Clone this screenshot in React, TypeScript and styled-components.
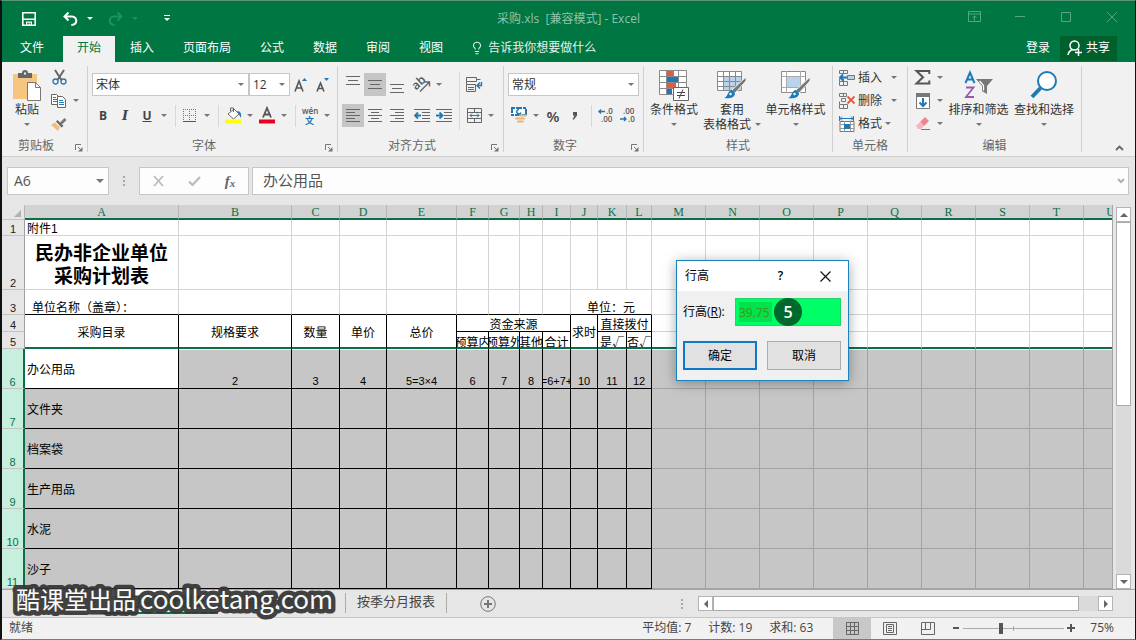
import React from "react";
import styled, { createGlobalStyle, css } from "styled-components";
import { Lightbulb } from "lucide-react";

const GREEN = "#007642";
const LINE = "#0c6f49";
const UI = `"Open Sans", "Noto Sans CJK SC", sans-serif`;
const CELL = `"Liberation Sans", "Noto Sans CJK SC", sans-serif`;

const Global = createGlobalStyle`
  *, *::before, *::after { box-sizing: border-box; }
  body { margin: 0; font: 12px/16px ${UI}; color: #444; background: #e6e6e6; }
  button, input, select { font: inherit; color: inherit; margin: 0; padding: 0; border: 0; background: none; border-radius: 0; }
  button { display: flex; align-items: center; justify-content: center; white-space: nowrap; }
  svg { display: block; flex: none; overflow: visible; }
`;

const Window = styled.div`
  position: relative;
  display: flex;
  flex-direction: column;
  min-height: 100vh;
  overflow: hidden;
  border: solid #111;
  border-width: 1px 1px 1px 2px;
  border-top-color: #5b9478;
  border-bottom-color: #7a7a7a;
`;

/* ---------- title bar ---------- */
const TitleBar = styled.header`
  display: grid;
  grid-template-columns: 1fr auto 1fr;
  align-items: center;
  height: 35px;
  background: ${GREEN};
  color: #8fc4ab;
`;
const QuickBar = styled.div`
  display: flex;
  align-items: center;
  padding-left: 16px;
  color: #fff;
`;
const QuickButton = styled.button<{ $w: number; $dim?: boolean }>`
  gap: 9px;
  width: ${(p) => p.$w}px;
  height: 24px;
  color: ${(p) => (p.$dim ? "#17965c" : "#fff")};
`;
const DocTitle = styled.h1`
  margin: 0;
  font-size: 12px;
  font-weight: 400;
  white-space: pre;
`;
const WindowButtons = styled.div`
  display: flex;
  justify-content: flex-end;
  color: #55a683;
`;
const WindowButton = styled.button`
  width: 46px;
  height: 28px;
  padding-bottom: 4px;
`;

/* ---------- ribbon tabs ---------- */
const TabBar = styled.nav`
  display: flex;
  gap: 1px;
  height: 26px;
  background: ${GREEN};
  color: #fff;
`;
const RibbonTab = styled.button<{ $active?: boolean; $wide?: boolean }>`
  padding: 0 ${(p) => (p.$wide ? 18 : 14)}px 2px;
  ${(p) => p.$active && css`background: #f1f1f1; color: ${GREEN};`}
`;
const TellMe = styled.button`
  gap: 4px;
  padding: 0 12px 2px;
  color: #e4f2ea;
`;
const Account = styled.div`
  display: flex;
  gap: 10px;
  margin-left: auto;
  padding-right: 18px;
`;
const SignIn = styled.button`
  padding-bottom: 2px;
`;
const ShareButton = styled.button`
  gap: 4px;
  width: 57px;
  height: 25px;
  padding-bottom: 2px;
  background: #00602c;
`;

/* ---------- ribbon ---------- */
const Ribbon = styled.section`
  display: flex;
  height: 95px;
  padding: 4px 0;
  background: #f1f1f1;
  border-bottom: 1px solid #cfcfcf;
`;
const GroupBox = styled.div<{ $w: number }>`
  display: flex;
  flex-direction: column;
  flex: none;
  width: ${(p) => p.$w}px;
  border-right: 1px solid #d0d0d0;
`;
const GroupBody = styled.div`
  display: flex;
  flex: 1;
  padding-left: 4px;
`;
const GroupFooter = styled.div`
  display: flex;
  align-items: center;
  height: 16px;
  margin-bottom: -2px;
  color: #666;
`;
const GroupLabel = styled.span`
  flex: 1;
  text-align: center;
`;
const Launcher = styled.button`
  width: 17px;
  height: 16px;
  padding-top: 4px;
`;
const Stack = styled.div<{ $three?: boolean }>`
  display: flex;
  flex-direction: column;
  ${(p) => !p.$three && css`gap: 8px; padding-top: 7px;`}
`;
const Line = styled.div`
  display: flex;
  align-items: center;
  height: 23px;
`;
const Tool = styled.button<{ $on?: boolean; $indent?: boolean; $look?: "italic" | "percent" }>`
  width: 22px;
  height: 23px;
  margin-left: ${(p) => (p.$indent ? 3 : 0)}px;
  background: ${(p) => (p.$on ? "#c5c5c5" : "none")};
  font-weight: 700;
  ${(p) => p.$look === "italic" && css`font: italic 700 13px "DejaVu Serif", serif;`}
  ${(p) => p.$look === "percent" && css`font-size: 15px; font-weight: 600;`}
`;
const ArrowButton = styled.button<{ $far?: boolean }>`
  width: 12px;
  height: 23px;
  margin-left: ${(p) => (p.$far ? 6 : 0)}px;
  color: #777;
`;
const Divider = styled.span<{ $tall?: boolean }>`
  flex: none;
  width: 1px;
  height: ${(p) => (p.$tall ? 58 : 22)}px;
  margin: ${(p) => (p.$tall ? "6px 3px 0 4px" : "0 3px 0 5px")};
  background: #d8d8d8;
`;
const SelectBox = styled.label<{ $w: number }>`
  position: relative;
  flex: none;
  width: ${(p) => p.$w}px;
  height: 23px;
  color: #777;
  select {
    width: 100%;
    height: 100%;
    padding: 0 16px 0 3px;
    appearance: none;
    background: #fff;
    border: 1px solid #c6c6c6;
    color: #333;
  }
  svg { position: absolute; right: 5px; top: 10px; pointer-events: none; }
`;
const BigButton = styled.button<{ $w: number }>`
  flex-direction: column;
  justify-content: flex-start;
  width: ${(p) => p.$w}px;
  height: 70px;
  padding-top: 2px;
  line-height: 15px;
  color: #333;
`;
const BigIcon = styled.span`
  display: grid;
  place-items: center;
  height: 34px;
`;
const BigLine = styled.span`
  display: flex;
  align-items: center;
  gap: 4px;
  height: 15px;
  color: #333;
  svg { color: #777; }
`;
const RowButton = styled.button`
  gap: 3px;
  height: 23px;
  padding-left: 2px;
  color: #333;
`;
const Collapse = styled.button`
  align-self: flex-end;
  width: 20px;
  height: 9px;
  margin: 0 6px 0 auto;
`;

/* ---------- formula bar ---------- */
const FormulaBar = styled.section`
  display: flex;
  height: 48px;
  padding: 10px 6px 10px 5px;
  color: #555;
  font-size: 15px;
`;
const NameBox = styled.label`
  position: relative;
  width: 102px;
  color: #777;
  input { width: 100%; height: 28px; padding: 0 0 2px 6px; border: 1px solid #c6c6c6; background: #fdfdfd; font-size: 14px; color: #555; }
  svg { position: absolute; right: 5px; top: 12px; }
`;
const Grip = styled.span`
  display: grid;
  place-items: center;
  width: 30px;
  color: #a8a8a8;
`;
const FormulaTools = styled.div`
  display: flex;
  justify-content: space-around;
  width: 110px;
  margin-right: 3px;
  border: 1px solid #c6c6c6;
  background: #fdfdfd;
`;
const FormulaTool = styled.button`
  width: 36px;
  font: italic 700 15px "Liberation Serif", serif;
  color: #666;
  small { font-size: 11px; padding-top: 4px; }
`;
const FormulaField = styled.label`
  position: relative;
  flex: 1;
  color: #b0b0b0;
  input { width: 100%; height: 28px; padding: 0 24px 3px 10px; border: 1px solid #c6c6c6; background: #fdfdfd; color: #555; }
  svg { position: absolute; right: 4px; top: 11px; }
`;

/* ---------- worksheet ---------- */
const Main = styled.main`
  display: flex;
  flex: 1;
`;
const GridPane = styled.div`
  flex: 1;
  min-width: 0;
  overflow: hidden;
  border-right: 1px solid #a5a5a5;
`;
const Sheet = styled.table`
  width: 0;
  table-layout: fixed;
  border-collapse: separate;
  border-spacing: 0;
  color: #000;
  font: 12px/11px ${CELL};
`;
const ColHead = styled.th`
  height: 15px;
  padding: 2px 0 0;
  overflow: hidden;
  background: #d2d2d2;
  border-right: 1px solid #b4b4b4;
  border-bottom: 2px solid ${LINE};
  color: ${LINE};
  font: 12px/11px "Liberation Serif", serif;
`;
const Corner = styled(ColHead)`
  background: #e6e6e6;
  border-right-color: #b4b4b4;
  border-bottom: 1px solid #c6c6c6;
  svg { margin-left: 12px; }
`;
const RowHead = styled.th<{ $sel?: boolean; $h: number }>`
  height: ${(p) => p.$h}px;
  padding: 0;
  vertical-align: bottom;
  font: 11px/12px ${CELL};
  border-bottom: 1px solid #c4c4c4;
  border-right: 1px solid #a0a0a0;
  background: #e6e6e6;
  color: #222;
  ${(p) => p.$sel && css`
    background: #c6efde;
    color: ${LINE};
    border-right: 2px solid ${LINE};
  `}
`;
type Kind = "grid" | "boxed" | "sel" | "selBoxed" | "active";
const edge: Record<Kind, string> = { grid: "#d4d4d4", boxed: "#000", sel: "#a3a3a3", selBoxed: "#000", active: "#000" };
const fill: Record<Kind, string> = { grid: "#fff", boxed: "#fff", sel: "#c6c6c6", selBoxed: "#c6c6c6", active: "#fff" };
const Cell = styled.td<{ $kind?: Kind; $bottom?: "black" | "green"; $low?: boolean; $topLight?: boolean }>`
  padding: 0;
  overflow: hidden;
  vertical-align: ${(p) => (p.$low ? "bottom" : "middle")};
  background: ${(p) => fill[p.$kind ?? "grid"]};
  border-right: 1px solid ${(p) => edge[p.$kind ?? "grid"]};
  border-bottom: 1px solid ${(p) => edge[p.$kind ?? "grid"]};
  ${(p) => p.$bottom === "black" && css`border-bottom-color: #000;`}
  ${(p) => p.$bottom === "green" && css`border-bottom: 2px solid ${LINE};`}
  ${(p) => p.$topLight && css`box-shadow: inset 0 1px #eefaf5;`}
`;
const Clip = styled.div<{ $align?: "left" | "indent" }>`
  display: flex;
  justify-content: ${(p) => (p.$align ? "flex-start" : "center")};
  padding-top: 4px;
  padding-left: ${(p) => (p.$align === "left" ? 2 : p.$align === "indent" ? 7 : 0)}px;
  white-space: nowrap;
`;
const Figures = styled(Clip)`
  padding-top: 2px;
  font-size: 11px;
  line-height: 13px;
`;
const SubHead = styled(Clip)`
  height: 15px;
  padding-top: 0;
  line-height: 19px;
  font-family: "Noto Sans CJK SC", sans-serif;
`;
const Heading = styled.div`
  font: 700 19px/23px "Noto Sans CJK SC", sans-serif;
  text-align: center;
  white-space: nowrap;
`;
const VScroll = styled.div`
  display: flex;
  flex-direction: column;
  width: 22px;
  padding: 2px 4px 0 3px;
`;
const ScrollButton = styled.button`
  flex: none;
  width: 15px;
  height: 15px;
  background: #fff;
  border: 1px solid #b4b4b4;
  color: #666;
`;
const Thumb = styled.div<{ $grow: number }>`
  flex: ${(p) => p.$grow} 1 0;
  background: #fff;
  border: 1px solid #ababab;
`;
const Track = styled.div<{ $grow: number }>`
  flex: ${(p) => p.$grow} 1 0;
  background: #dadada;
`;

/* ---------- sheet tabs ---------- */
const SheetBar = styled.nav`
  display: flex;
  height: 28px;
  border-top: 1px solid #a5a5a5;
  background: #e6e6e6;
  font-size: 13px;
`;
const SheetNav = styled.div`
  display: flex;
  align-items: center;
  justify-content: space-around;
  width: 100px;
`;
const SheetTab = styled.button<{ $w: number; $active?: boolean }>`
  width: ${(p) => p.$w}px;
  height: 24px;
  ${(p) => p.$active
    ? css`background: #fff; color: ${LINE}; font-weight: 700; border-bottom: 2px solid ${GREEN};`
    : css`height: 20px; margin-top: 3px; border-right: 1px solid #ababab; padding-bottom: 4px;`}
`;
const AddSheet = styled.button`
  width: 82px;
  color: #777;
`;
const BarGrip = styled.span`
  display: grid;
  place-items: center;
  width: 32px;
  margin-left: auto;
  color: #a8a8a8;
`;
const HScroll = styled.div`
  display: flex;
  width: 415px;
  height: 15px;
  margin: 6px 22px 0 0;
`;

/* ---------- status bar ---------- */
const StatusBar = styled.footer`
  display: flex;
  align-items: center;
  height: 22px;
  padding: 0 21px 1px 7px;
  background: #f1f1f1;
  border-top: 1px solid #c6c6c6;
`;
const Stats = styled.div`
  display: flex;
  gap: 17px;
  margin: 0 20px 0 auto;
`;
const Views = styled.div`
  display: flex;
  margin-right: 2px;
`;
const ViewButton = styled.button<{ $on?: boolean }>`
  width: 38px;
  height: 21px;
  margin-bottom: -1px;
  background: ${(p) => (p.$on ? "#c8c8c8" : "none")};
  color: #666;
`;
const ZoomStep = styled.button`
  width: 14px;
  height: 20px;
`;
const ZoomRange = styled.input`
  width: 101px;
  height: 14px;
  appearance: none;
  background:
    linear-gradient(#aaa, #aaa) center / 1px 5px no-repeat,
    linear-gradient(#aaa, #aaa) center / 100% 1px no-repeat;
  &::-webkit-slider-thumb { appearance: none; width: 4px; height: 11px; background: #555; }
`;
const ZoomValue = styled.span`
  margin-left: 12px;
`;

/* ---------- row height dialog ---------- */
const Dialog = styled.form`
  position: absolute;
  left: 674px;
  top: 259px;
  width: 173px;
  border: 1px solid #1b82c0;
  background: #f0f0f0;
  box-shadow: 0 2px 12px rgba(0, 0, 0, 0.35);
  color: #000;
`;
const DialogTitle = styled.div`
  display: flex;
  align-items: center;
  height: 30px;
  padding-left: 8px;
  background: #fff;
`;
const DialogTitleButton = styled.button<{ $push?: boolean }>`
  width: 45px;
  height: 28px;
  font-weight: 600;
  margin-left: ${(p) => (p.$push ? "auto" : 0)};
`;
const Field = styled.div`
  position: relative;
  display: flex;
  align-items: center;
  justify-content: space-between;
  margin: 7px 7px 15px 6px;
  input {
    width: 106px;
    height: 28px;
    padding-left: 3px;
    border: 1px solid #1fd568;
    background: linear-gradient(#00e24e, #00e24e) 3px 3px / 33px 20px no-repeat #00ff66;
    color: #3f9a12;
  }
`;
const StepBadge = styled.span`
  position: absolute;
  right: 39px;
  top: 0;
  width: 28px;
  height: 28px;
  border-radius: 50%;
  background: #00692c;
  color: #fff;
  font: 600 16px/28px "Open Sans", sans-serif;
  text-align: center;
`;
const DialogActions = styled.div`
  display: flex;
  justify-content: space-between;
  padding: 0 7px 10px 6px;
`;
const DialogButton = styled.button<{ $primary?: boolean }>`
  width: 74px;
  height: 29px;
  background: #e1e1e1;
  border: ${(p) => (p.$primary ? "2px solid #0f78c8" : "1px solid #adadad")};
`;

const Watermark = styled.svg`
  position: absolute;
  left: 14px;
  bottom: 22px;
  font: 400 24px "Noto Sans CJK SC", sans-serif;
  fill: #fff;
  stroke: #353535;
  stroke-width: 9px;
  stroke-linejoin: round;
  paint-order: stroke;
  pointer-events: none;
  opacity: 0.93;
`;

/* ---------- icons ---------- */
const Svg = ({ w, h, children, ...rest }: { w: number; h: number; children: React.ReactNode } & React.SVGProps<SVGSVGElement>) => (
  <svg width={w} height={h} viewBox={`0 0 ${w} ${h}`} fill="none" aria-hidden="true" {...rest}>{children}</svg>
);
const Caret = () => <Svg w={6} h={3}><path d="M0 0h6L3 3z" fill="currentColor" /></Svg>;
const BigCaret = () => <Svg w={8} h={4}><path d="M0 0h8L4 4z" fill="currentColor" /></Svg>;
const Dots = () => <Svg w={2} h={10}><path d="M0 0h2v2H0zM0 4h2v2H0zM0 8h2v2H0z" fill="currentColor" /></Svg>;
const Lines = ({ rows, h = 17 }: { rows: [number, number, number][]; h?: number }) => (
  <Svg w={14} h={h}>{rows.map(([x, y, w]) => <path key={y} d={`M${x} ${y + 0.5}h${w}`} stroke="#666" />)}</Svg>
);
const LauncherIcon = () => (
  <Svg w={8} h={8}><path d="M.5 6V.5H6M3 3l3 3" stroke="#777" /><path d="M7.500 3v4.500H3z" fill="#777" /></Svg>
);
const SaveIcon = () => (
  <Svg w={14} h={14}><path d="M.8.8h12.400v12.400H.8z" stroke="#fff" strokeWidth="1.600" /><path d="M1 6.500h12v1.500H1zM4 9.500h6v1.200H4zM4 9.500h1.200v4H4zM6.500 11.500h1.500v2H6.500zM8.800 9.500H10v4H8.800z" fill="#fff" /></Svg>
);
const UndoIcon = ({ flip }: { flip?: boolean }) => (
  <Svg w={15} h={14} style={flip ? { transform: "scaleX(-1)" } : undefined}>
    <path d="M5.500 .5L1.500 4.500L5.500 8.500M2 4.500H9a4.300 4.300 0 0 1 4.300 4.300c0 2.500-1.500 4-5 4.200" stroke="currentColor" strokeWidth="2" />
  </Svg>
);
const CustomizeIcon = () => <Svg w={6} h={7}><path d="M0 0h6v1H0zM0 3h6L3 6z" fill="#fff" /></Svg>;
const PasteIcon = () => (
  <Svg w={28} h={31}>
    <path d="M0 4h24v25H0z" fill="#f6c57f" />
    <path d="M5 3h4a3 3 0 0 1 6 0h4v5H5z" fill="#666" /><path d="M11 2.500h2v2h-2z" fill="#f1f1f1" />
    <path d="M14.500 12.500h8l5 5v13h-13z" fill="#fff" stroke="#777" /><path d="M22.500 12.500v5h5" stroke="#777" />
  </Svg>
);
const CutIcon = () => (
  <Svg w={15} h={15}>
    <path d="M3 0l6.500 10M12 0L5.500 10" stroke="#666" strokeWidth="2" />
    <circle cx="3.500" cy="11.500" r="2.500" stroke="#2277b5" strokeWidth="1.300" /><circle cx="11.500" cy="11.500" r="2.500" stroke="#2277b5" strokeWidth="1.300" />
  </Svg>
);
const CopyIcon = () => (
  <Svg w={16} h={14}>
    <path d="M.5.5h5l2 2v8h-7z" fill="#fff" stroke="#666" /><path d="M2 3.500h3M2 5.500h4M2 7.500h4" stroke="#2277b5" />
    <path d="M6.500 2.500h5l3 3v8h-8z" fill="#fff" stroke="#666" /><path d="M8 6.500h4M8 8.500h5M8 10.500h5" stroke="#2277b5" />
  </Svg>
);
const BrushIcon = () => (
  <Svg w={16} h={14}>
    <path d="M0 8l4-2.500 5 5L7 14z" fill="#f0bf7d" /><path d="M5 4.500l1.500-1.500 6 6-2 1.500z" fill="#666" /><path d="M9 5.500L13.500 1l2 2L11 7.500z" fill="#777" />
  </Svg>
);
const GrowA = ({ down }: { down?: boolean }) => (
  <Svg w={14} h={16}>
    <path d={down ? "M1 14.500L4.500 6l3.500 8.500M2.500 11.500h4.500" : "M1 14.500L5 4l4 10.500M2.500 11h5"} stroke="#555" strokeWidth="1.600" />
    <path d={down ? "M8 1h5l-2.500 3z" : "M8 4h5l-2.500-3z"} fill="#2277b5" />
  </Svg>
);
const BorderIcon = () => (
  <Svg w={14} h={14}>
    <path d="M.5 0v12M6.500 0v12M12.500 0v12M0 .5h13M0 6.500h13" stroke="#777" strokeDasharray="1 1" /><path d="M0 12.500h13" stroke="#555" />
  </Svg>
);
const FillIcon = () => (
  <Svg w={17} h={17}>
    <path d="M3 7l6-5 5 5-5.500 5z" fill="#fff" stroke="#666" /><path d="M5.500 4V1h3v4" stroke="#666" />
    <path d="M12 4c4 0 4.500 3 4 7-1-2-2-3-2-4z" fill="#2277b5" /><path d="M0 12.500h16v4H0z" fill="#ff0" />
  </Svg>
);
const FontColorIcon = () => (
  <Svg w={16} h={17}><path d="M4 10.500L8 1l4 9.500M5.500 7.500h5" stroke="#555" strokeWidth="1.800" /><path d="M0 12.500h16v4H0z" fill="#e8001c" /></Svg>
);
const PhoneticIcon = () => (
  <Svg w={18} h={18}>
    <text x="1" y="7" fontSize="8" fontFamily="Open Sans" fontWeight="600" fill="#555">wén</text>
    <text x="4" y="17" fontSize="9" fontFamily="Noto Sans CJK SC" fontWeight="700" fill="#2277b5">文</text>
  </Svg>
);
const OrientIcon = () => (
  <Svg w={17} h={15}>
    <text x="-1" y="10" fontSize="12" fontFamily="Open Sans" fontWeight="600" fill="#555" transform="rotate(-42 5 8)">ab</text>
    <path d="M6 14.500l9-9M11 5h4.500v4.500" stroke="#666" strokeWidth="1.400" />
  </Svg>
);
const IndentIcon = ({ inc }: { inc?: boolean }) => (
  <Svg w={16} h={14}>
    <path d="M0 .5h16M8 3.500h8M8 6.500h8M8 9.500h8M0 12.500h16" stroke="#666" />
    <path d={inc ? "M0 6.500h6M3.500 3.500l3 3-3 3" : "M1 6.500h6M4 3.500l-3 3 3 3"} stroke="#2277b5" strokeWidth="1.800" />
  </Svg>
);
const WrapIcon = () => (
  <Svg w={16} h={16}>
    <path d="M.5.500h10v4H.5zM.5 7.500h9v7h-9zM2 10.500h6M2 12.500h6M.5 4.500v3M10.500 2.500h4" stroke="#666" />
    <path d="M15.500 5v3.500h-4M14 5.500l-3 3 3 3" stroke="#2277b5" strokeWidth="1.400" />
  </Svg>
);
const MergeIcon = () => (
  <Svg w={15} h={15}>
    <path d="M.5.5h14v14H.5zM.5 4.500h14M.5 10.500h14M7.500 0v4M7.500 11v4" stroke="#666" />
    <path d="M3 7.500h9M5 5.500l-2 2 2 2M10 5.500l2 2-2 2" stroke="#2277b5" />
  </Svg>
);
const CurrencyIcon = () => (
  <Svg w={17} h={17}>
    <path d="M1 1h14v7H1z" fill="#fff" stroke="#2277b5" strokeWidth="2" strokeDasharray="3 1 6 1" /><path d="M8 2.500a2.200 2.200 0 1 0 2 3" stroke="#2277b5" strokeWidth="1.500" />
    <path d="M9 8.500h6M5 11.500h8M7 14.500h5" stroke="#eab676" strokeWidth="2" strokeLinecap="round" />
  </Svg>
);
const DecimalIcon = ({ less }: { less?: boolean }) => (
  <Svg w={16} h={15}>
    <g fontSize="8" fontFamily="Open Sans" fontWeight="600" fill="#555">
      <text x={less ? 3 : 8} y="6">{less ? ".00" : ".0"}</text>
      <text x={less ? 8 : 3} y="14">{less ? ".0" : ".00"}</text>
    </g>
    <path d={less ? "M0 11h6M4 9l2 2-2 2" : "M1 3.500h6M3 1.500l-2 2 2 2"} stroke="#2277b5" strokeWidth="1.400" />
  </Svg>
);
const ConditionalIcon = () => (
  <Svg w={30} h={31}>
    <path d="M.5.5h27v24H.5z" fill="#fff" />
    <path d="M8 1h6v6H8zM8 13h9v5H8z" fill="#e8593b" /><path d="M8 7h11v5H8zM8 19h5v5H8z" fill="#1d7ab8" />
    <path d="M.5.500h27v24H.5zM7.500 0v25M14.500 0v6M19.500 0v25M0 6.500h28M0 12.500h28M0 18.500h28" stroke="#8a8a8a" />
    <path d="M14.500 17.500h15v13h-15z" fill="#fff" stroke="#666" /><path d="M18 22.500h8M18 25.500h8M24 19.500l-4 9" stroke="#444" />
  </Svg>
);
const Brush = () => (
  <>
    <path d="M29 6v4L18 22l-3-3z" fill="#777" stroke="#f1f1f1" strokeWidth="1" />
    <path d="M14 19c2 0 4 2 4 4-1 4-5 5-11 4 4-1 3-6 7-8z" fill="#1d7ab8" /><path d="M12.500 23.500l2-1" stroke="#fff" strokeWidth="2" />
  </>
);
const TableStyleIcon = () => (
  <Svg w={30} h={28}>
    <path d="M.5.5h24v19H.5z" fill="#fff" /><path d="M7 5h17v14H7z" fill="#b8d3ea" />
    <path d="M.5.500h24v19H.5zM6.500 0v20M12.500 0v20M18.500 0v20M0 5.500h25M0 10.500h25M0 15.500h25" stroke="#8a8a8a" /><Brush />
  </Svg>
);
const CellStyleIcon = () => (
  <Svg w={30} h={28}>
    <path d="M.5.500h24v21H.5z" fill="#fff" stroke="#8a8a8a" /><path d="M.5 5.500h24M.5 16.500h24M5.500 0v22M19.500 0v22" stroke="#aaa" /><path d="M6 6h13v10H6z" fill="#b8d3ea" /><Brush />
  </Svg>
);
const InsertIcon = () => (
  <Svg w={16} h={16}>
    <path d="M.5.5h8v3h-8zM4.500 0v3M.5 11.500h8v4h-8zM4.500 11v4M.5 8.500v3M4.500 8.500v3" stroke="#777" />
    <path d="M8.500 5.500h7v4h-7z" fill="#b8d3ea" stroke="#777" /><path d="M1 7.500h7M4 4.500l-3 3 3 3" stroke="#2277b5" strokeWidth="1.800" />
  </Svg>
);
const DeleteIcon = () => (
  <Svg w={16} h={16}>
    <path d="M.5.5h7v3h-7zM4.500 0v3M.5 11.500h8v4h-8zM4.500 11v4M2.500 5.500h4v3h-4zM.5 8.500v3" stroke="#777" />
    <path d="M8.500 3.500l7 7M15.500 3.500l-7 7" stroke="#e8593b" strokeWidth="1.800" />
  </Svg>
);
const FormatIcon = () => (
  <Svg w={16} h={16}>
    <path d="M1 2.500h13M3 .5l-2 2 2 2M12 .5l2 2-2 2M.5 0v5M14.500 0v5" stroke="#2277b5" />
    <path d="M1 5.500h14v10H1z" fill="#fff" stroke="#777" /><path d="M5.500 5v11M11.500 5v11M1 8.500h14M1 12.500h14" stroke="#999" /><path d="M5 8h6v5H5z" fill="#1d7ab8" />
  </Svg>
);
const SumIcon = () => <Svg w={16} h={15}><path d="M14.300 4V1H1.500L8 7.200 1.500 13.500h12.800V10.500" stroke="#555" strokeWidth="2" /></Svg>;
const FillDownIcon = () => (
  <Svg w={14} h={16}><path d="M.5.5h13v15H.5z" fill="#fff" stroke="#777" /><path d="M0 0h14v4H0z" fill="#777" /><path d="M7 5v8M3.500 9.500L7 13l3.500-3.500" stroke="#2277b5" strokeWidth="2" /></Svg>
);
const EraserIcon = () => (
  <Svg w={15} h={13}><path d="M9 0l4 4-5 5-4-4z" fill="#f2848f" /><path d="M4 5l4 4-3 3H2L0 9z" fill="#f9b3ba" /><path d="M5 12.500h9" stroke="#777" /></Svg>
);
const SortIcon = () => (
  <Svg w={30} h={28}>
    <path d="M1.500 12L6 1.500 10.500 12M3 8.500h6" stroke="#1d7ab8" strokeWidth="2" /><path d="M2 16.500h7.500L2 26h8" stroke="#9a57b0" strokeWidth="1.800" />
    <path d="M12 8h17l-6 7v8l-5-3v-5z" fill="#777" /><path d="M15.500 10l4 4.500v5" stroke="#fff" strokeWidth="1.300" />
  </Svg>
);
const FindIcon = () => (
  <Svg w={28} h={28}><circle cx="17" cy="10" r="9" fill="#fff" stroke="#1d7ab8" strokeWidth="2" /><path d="M10.500 17L2 26" stroke="#1d7ab8" strokeWidth="4" /></Svg>
);

/* ---------- parts ---------- */
const Group = ({ label, width, launcher, children }: { label: string; width: number; launcher?: boolean; children: React.ReactNode }) => (
  <GroupBox $w={width}>
    <GroupBody>{children}</GroupBody>
    <GroupFooter>
      <GroupLabel>{label}</GroupLabel>
      {launcher && <Launcher aria-label={`${label}设置`}><LauncherIcon /></Launcher>}
    </GroupFooter>
  </GroupBox>
);
const Arrow = ({ far }: { far?: boolean }) => <ArrowButton $far={far} aria-label="更多"><Caret /></ArrowButton>;
const Pick = ({ name, width, value }: { name: string; width: number; value: string }) => (
  <SelectBox $w={width}><select aria-label={name} defaultValue={value}><option>{value}</option></select><Caret /></SelectBox>
);
const Big = ({ w, icon, label, second }: { w: number; icon: React.ReactNode; label: string; second?: string }) => (
  <BigButton $w={w}><BigIcon>{icon}</BigIcon><BigLine>{label}</BigLine><BigLine>{second}<Caret /></BigLine></BigButton>
);

const columns: [string, number][] = [
  ["A", 154], ["B", 113], ["C", 48], ["D", 47], ["E", 70], ["F", 32], ["G", 31], ["H", 23], ["I", 28], ["J", 27], ["K", 29], ["L", 25],
  ..."MNOPQRSTU".split("").map((c): [string, number] => [c, 54]),
];
const outer = columns.slice(12).map(([c]) => c);
const row6 = ["2", "3", "4", "5=3×4", "6", "7", "8", "9=6+7+8", "10", "11", "12"];
const items = ["文件夹", "档案袋", "生产用品", "水泥", "沙子"];

const Worksheet = () => (
  <Sheet>
    <colgroup><col style={{ width: 23 }} />{columns.map(([c, w]) => <col key={c} style={{ width: w }} />)}</colgroup>
    <thead>
      <tr>
        <Corner><Svg w={7} h={7}><path d="M7 0v7H0z" fill="#b0b0b0" /></Svg></Corner>
        {columns.map(([c]) => <ColHead key={c}>{c}</ColHead>)}
      </tr>
    </thead>
    <tbody>
      <tr>
        <RowHead $h={16}>1</RowHead>
        <Cell><Clip $align="left">附件1</Clip></Cell>
        {columns.slice(1).map(([c]) => <Cell key={c} />)}
      </tr>
      <tr>
        <RowHead $h={54}>2</RowHead>
        <Cell><Heading>民办非企业单位<br />采购计划表</Heading></Cell>
        {columns.slice(1).map(([c]) => <Cell key={c} />)}
      </tr>
      <tr>
        <RowHead $h={25}>3</RowHead>
        <Cell $bottom="black" $low><Clip $align="indent">单位名称（盖章）：</Clip></Cell>
        {columns.slice(1, 9).map(([c]) => <Cell key={c} $bottom="black" />)}
        <Cell colSpan={3} $bottom="black" $low><Clip>单位：元</Clip></Cell>
        {outer.map((c) => <Cell key={c} />)}
      </tr>
      <tr>
        <RowHead $h={17}>4</RowHead>
        {["采购目录", "规格要求", "数量", "单价", "总价"].map((t) => (
          <Cell key={t} rowSpan={2} $kind="boxed" $bottom="green"><Clip>{t}</Clip></Cell>
        ))}
        <Cell colSpan={4} $kind="boxed"><Clip>资金来源</Clip></Cell>
        <Cell rowSpan={2} $kind="boxed" $bottom="green"><Clip>求时</Clip></Cell>
        <Cell colSpan={2} $kind="boxed"><Clip>直接拨付</Clip></Cell>
        {outer.map((c) => <Cell key={c} />)}
      </tr>
      <tr>
        <RowHead $h={17}>5</RowHead>
        {["预算内", "预算外", "其他", "合计", "是√", "否√"].map((t) => (
          <Cell key={t} $kind="boxed" $bottom="green"><SubHead>{t}</SubHead></Cell>
        ))}
        {outer.map((c) => <Cell key={c} $bottom="green" />)}
      </tr>
      <tr>
        <RowHead $h={40} $sel>6</RowHead>
        <Cell $kind="active"><Clip $align="left">办公用品</Clip></Cell>
        {row6.map((t) => <Cell key={t} $kind="selBoxed" $low $topLight><Figures>{t}</Figures></Cell>)}
        {outer.map((c) => <Cell key={c} $kind="sel" $topLight />)}
      </tr>
      {items.map((name, i) => (
        <tr key={name}>
          <RowHead $h={40} $sel>{i + 7}</RowHead>
          <Cell $kind="selBoxed"><Clip $align="left">{name}</Clip></Cell>
          {row6.map((t) => <Cell key={t} $kind="selBoxed" />)}
          {outer.map((c) => <Cell key={c} $kind="sel" />)}
        </tr>
      ))}
    </tbody>
  </Sheet>
);

const RibbonGroups = () => (
  <Ribbon>
    <Group label="剪贴板" width={86} launcher>
      <Big w={42} icon={<PasteIcon />} label="粘贴" />
      <Stack $three>
        <Line><Tool aria-label="剪切"><CutIcon /></Tool></Line>
        <Line><Tool aria-label="复制"><CopyIcon /></Tool><Arrow /></Line>
        <Line><Tool aria-label="格式刷"><BrushIcon /></Tool></Line>
      </Stack>
    </Group>
    <Group label="字体" width={250} launcher>
      <Stack>
        <Line>
          <Pick name="字体" width={157} value="宋体" /><Pick name="字号" width={41} value="12" />
          <Tool aria-label="增大字号"><GrowA /></Tool><Tool aria-label="减小字号"><GrowA down /></Tool>
        </Line>
        <Line>
          <Tool>B</Tool><Tool $look="italic">I</Tool><Tool><u>U</u></Tool><Arrow />
          <Divider />
          <Tool aria-label="边框"><BorderIcon /></Tool><Arrow />
          <Divider />
          <Tool aria-label="填充颜色"><FillIcon /></Tool><Arrow />
          <Tool aria-label="字体颜色"><FontColorIcon /></Tool><Arrow />
          <Divider />
          <Tool aria-label="拼音"><PhoneticIcon /></Tool><Arrow />
        </Line>
      </Stack>
    </Group>
    <Group label="对齐方式" width={166} launcher>
      <Stack>
        <Line>
          <Tool aria-label="顶端对齐"><Lines rows={[[0, 0, 14], [2, 4, 10], [0, 8, 14]]} /></Tool>
          <Tool $on aria-label="垂直居中"><Lines rows={[[0, 4, 14], [2, 8, 10], [0, 12, 14]]} /></Tool>
          <Tool aria-label="底端对齐"><Lines rows={[[0, 8, 14], [2, 12, 10], [0, 16, 14]]} /></Tool>
          <Tool $indent aria-label="方向"><OrientIcon /></Tool><Arrow />
        </Line>
        <Line>
          <Tool $on aria-label="左对齐"><Lines h={13} rows={[[0, 0, 14], [0, 3, 9], [0, 6, 14], [0, 9, 9], [0, 12, 14]]} /></Tool>
          <Tool aria-label="居中"><Lines h={13} rows={[[0, 0, 14], [3, 3, 8], [0, 6, 14], [3, 9, 8], [0, 12, 14]]} /></Tool>
          <Tool aria-label="右对齐"><Lines h={13} rows={[[0, 0, 14], [5, 3, 9], [0, 6, 14], [5, 9, 9], [0, 12, 14]]} /></Tool>
          <Tool $indent aria-label="减少缩进"><IndentIcon /></Tool><Tool aria-label="增加缩进"><IndentIcon inc /></Tool>
        </Line>
      </Stack>
      <Divider $tall />
      <Stack>
        <Line><Tool aria-label="自动换行"><WrapIcon /></Tool></Line>
        <Line><Tool aria-label="合并"><MergeIcon /></Tool><Arrow /></Line>
      </Stack>
    </Group>
    <Group label="数字" width={140} launcher>
      <Stack>
        <Line><Pick name="数字格式" width={131} value="常规" /></Line>
        <Line>
          <Tool aria-label="货币"><CurrencyIcon /></Tool><Arrow />
          <Tool $look="percent">%</Tool>
          <Tool aria-label="千位分隔"><Svg w={6} h={9}><path d="M1 1h4v3.500L2 8.500H.5L2.500 4.500H1z" fill="#555" /></Svg></Tool>
          <Divider />
          <Tool aria-label="增加小数位"><DecimalIcon /></Tool><Tool aria-label="减少小数位"><DecimalIcon less /></Tool>
        </Line>
      </Stack>
    </Group>
    <Group label="样式" width={189}>
      <Big w={52} icon={<ConditionalIcon />} label="条件格式" />
      <Big w={64} icon={<TableStyleIcon />} label="套用" second="表格格式" />
      <Big w={63} icon={<CellStyleIcon />} label="单元格样式" />
    </Group>
    <Group label="单元格" width={75}>
      <Stack $three>
        <Line><RowButton><InsertIcon />插入</RowButton><Arrow far /></Line>
        <Line><RowButton><DeleteIcon />删除</RowButton><Arrow far /></Line>
        <Line><RowButton><FormatIcon />格式</RowButton><Arrow /></Line>
      </Stack>
    </Group>
    <Group label="编辑" width={174}>
      <Stack $three>
        <Line><Tool aria-label="求和"><SumIcon /></Tool><Arrow /></Line>
        <Line><Tool aria-label="填充"><FillDownIcon /></Tool><Arrow /></Line>
        <Line><Tool aria-label="清除"><EraserIcon /></Tool><Arrow /></Line>
      </Stack>
      <Big w={65} icon={<SortIcon />} label="排序和筛选" />
      <Big w={66} icon={<FindIcon />} label="查找和选择" />
    </Group>
    <Collapse aria-label="折叠功能区"><Svg w={9} h={6}><path d="M1 5l3.500-3.500L8 5" stroke="#666" strokeWidth="1.800" /></Svg></Collapse>
  </Ribbon>
);

export default function App() {
  return (
    <Window>
      <Global />
      <TitleBar>
        <QuickBar>
          <QuickButton $w={22} aria-label="保存"><SaveIcon /></QuickButton>
          <QuickButton $w={76} aria-label="撤消"><UndoIcon /><Caret /></QuickButton>
          <QuickButton $w={14} $dim aria-label="恢复"><UndoIcon flip /><Caret /></QuickButton>
          <QuickButton $w={74} aria-label="自定义"><CustomizeIcon /></QuickButton>
        </QuickBar>
        <DocTitle>采购.xls  [兼容模式] - Excel</DocTitle>
        <WindowButtons>
          <WindowButton aria-label="功能区显示选项"><Svg w={13} h={11}><path d="M.5.5h12v10H.5zM.5 3h12M6.500 9.500V5M4.500 6.800l2-2 2 2" stroke="currentColor" /></Svg></WindowButton>
          <WindowButton aria-label="最小化"><Svg w={10} h={1}><path d="M0 .5h10" stroke="currentColor" /></Svg></WindowButton>
          <WindowButton aria-label="最大化"><Svg w={10} h={10}><path d="M.5.5h9v9h-9z" stroke="currentColor" /></Svg></WindowButton>
          <WindowButton aria-label="关闭"><Svg w={10} h={10}><path d="M0 0l10 10M10 0L0 10" stroke="currentColor" /></Svg></WindowButton>
        </WindowButtons>
      </TitleBar>
      <TabBar>
        <RibbonTab $wide>文件</RibbonTab>
        <RibbonTab $active>开始</RibbonTab>
        {["插入", "页面布局", "公式", "数据", "审阅", "视图"].map((t) => <RibbonTab key={t}>{t}</RibbonTab>)}
        <TellMe><Lightbulb size={14} strokeWidth={1.8} />告诉我你想要做什么</TellMe>
        <Account>
          <SignIn>登录</SignIn>
          <ShareButton>
            <Svg w={15} h={16}><circle cx="7.500" cy="5.500" r="4.500" stroke="#fff" strokeWidth="1.500" /><path d="M1 15c.5-3 2-4.500 4.500-5.500M8 12.500h7M11.500 9v7" stroke="#fff" strokeWidth="1.500" /></Svg>
            共享
          </ShareButton>
        </Account>
      </TabBar>
      <RibbonGroups />
      <FormulaBar>
        <NameBox><input aria-label="名称框" defaultValue="A6" /><BigCaret /></NameBox>
        <Grip><Dots /></Grip>
        <FormulaTools>
          <FormulaTool aria-label="取消输入"><Svg w={11} h={10}><path d="M1 0l9 10M10 0L1 10" stroke="#bbb" strokeWidth="1.800" /></Svg></FormulaTool>
          <FormulaTool aria-label="确认输入"><Svg w={13} h={10}><path d="M1 5.500L4.500 9 12 1" stroke="#bbb" strokeWidth="2.200" /></Svg></FormulaTool>
          <FormulaTool>f<small>x</small></FormulaTool>
        </FormulaTools>
        <FormulaField><input aria-label="编辑栏" defaultValue="办公用品" /><Svg w={8} h={6}><path d="M1 1l3 3 3-3" stroke="currentColor" strokeWidth="2" /></Svg></FormulaField>
      </FormulaBar>
      <Main>
        <GridPane><Worksheet /></GridPane>
        <VScroll>
          <ScrollButton aria-label="向上滚动"><Svg w={8} h={4}><path d="M0 4h8L4 0z" fill="currentColor" /></Svg></ScrollButton>
          <Thumb $grow={52} /><Track $grow={48} />
          <ScrollButton aria-label="向下滚动"><BigCaret /></ScrollButton>
        </VScroll>
      </Main>
      <SheetBar>
        <SheetNav>
          <Svg w={4} h={8}><path d="M4 0v8L0 4z" fill="#777" /></Svg><Svg w={4} h={8}><path d="M0 0v8l4-4z" fill="#777" /></Svg><span>...</span>
        </SheetNav>
        <SheetTab $w={116} $active>部门采购计划表</SheetTab>
        <SheetTab $w={128}>采购分季报表</SheetTab>
        <SheetTab $w={101}>按季分月报表</SheetTab>
        <AddSheet aria-label="新工作表"><Svg w={16} h={16}><circle cx="8" cy="8" r="7.300" stroke="currentColor" /><path d="M8 4v8M4 8h8" stroke="currentColor" strokeWidth="2" /></Svg></AddSheet>
        <BarGrip><Dots /></BarGrip>
        <HScroll>
          <ScrollButton aria-label="向左滚动"><Svg w={4} h={8}><path d="M4 0v8L0 4z" fill="currentColor" /></Svg></ScrollButton>
          <Thumb $grow={95} /><Track $grow={5} />
          <ScrollButton aria-label="向右滚动"><Svg w={4} h={8}><path d="M0 0v8l4-4z" fill="currentColor" /></Svg></ScrollButton>
        </HScroll>
      </SheetBar>
      <StatusBar>
        <span>就绪</span>
        <Stats><span>平均值: 7</span><span>计数: 19</span><span>求和: 63</span></Stats>
        <Views>
          <ViewButton $on aria-label="普通"><Svg w={13} h={13}><path d="M.5.500h12v12H.5zM4.500 0v13M8.500 0v13M0 4.500h13M0 8.500h13" stroke="currentColor" /></Svg></ViewButton>
          <ViewButton aria-label="页面布局"><Svg w={14} h={13}><path d="M.5.500h13v12H.5zM3.500 2.500h7v8h-7zM5 4.500h4M5 6.500h4M5 8.500h4" stroke="currentColor" /></Svg></ViewButton>
          <ViewButton aria-label="分页预览"><Svg w={14} h={13}><path d="M.5.500h13v12H.5zM4.500 0v7M9.500 0v7.500H0" stroke="currentColor" /></Svg></ViewButton>
        </Views>
        <ZoomStep aria-label="缩小"><Svg w={6} h={2}><path d="M0 1h6" stroke="#555" strokeWidth="2" /></Svg></ZoomStep>
        <ZoomRange type="range" aria-label="显示比例" defaultValue={37} />
        <ZoomStep aria-label="放大"><Svg w={8} h={8}><path d="M0 4h8M4 0v8" stroke="#555" strokeWidth="2" /></Svg></ZoomStep>
        <ZoomValue>75%</ZoomValue>
      </StatusBar>
      <Dialog aria-label="行高">
        <DialogTitle>
          行高
          <DialogTitleButton type="button" $push>?</DialogTitleButton>
          <DialogTitleButton type="button" aria-label="关闭"><Svg w={11} h={11}><path d="M.5.5l10 10M10.500.5l-10 10" stroke="#111" strokeWidth="1.200" /></Svg></DialogTitleButton>
        </DialogTitle>
        <Field>
          <label htmlFor="row-height">行高(<u>R</u>):</label>
          <input id="row-height" defaultValue="39.75" />
          <StepBadge>5</StepBadge>
        </Field>
        <DialogActions>
          <DialogButton type="button" $primary>确定</DialogButton>
          <DialogButton type="button">取消</DialogButton>
        </DialogActions>
      </Dialog>
      <Watermark width={320} height={34}>
        <text x="0" y="26">酷课堂出品<tspan dx="4" fontSize="26">coolketang.com</tspan></text>
      </Watermark>
    </Window>
  );
}
